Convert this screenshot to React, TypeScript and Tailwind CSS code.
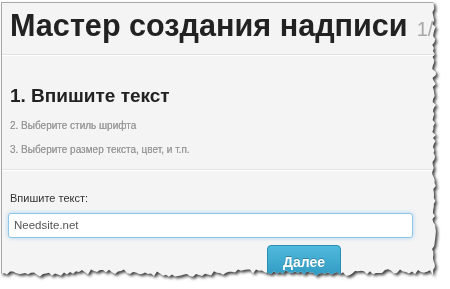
import React from "react";

function tornPolygon(): string {
  let seed = 7;
  const rnd = () => {
    seed = (seed * 9301 + 49297) % 233280;
    return seed / 233280;
  };
  const pts: string[] = [];
  const W = 436;
  const H = 275;
  pts.push("0px 0px");
  pts.push(`${W - 4}px 0px`);
  for (let y = 4; y < H - 4; y += 3) {
    const x = W - 3 + (rnd() - 0.5) * 4;
    pts.push(`${x.toFixed(1)}px ${y}px`);
  }
  for (let x = W - 4; x > 0; x -= 3) {
    const y = H - 4 + (rnd() - 0.5) * 5 + Math.sin(x / 23) * 1.5;
    pts.push(`${x}px ${y.toFixed(1)}px`);
  }
  pts.push(`0px ${H - 3}px`);
  return `polygon(${pts.join(",")})`;
}

export default function App() {
  const clip = tornPolygon();
  return (
    <div className="w-[450px] h-[289px] bg-white overflow-hidden font-['Liberation_Sans',Arial,sans-serif]">
      <div className="pt-[2px] pl-[1px] [filter:drop-shadow(2px_2px_1.5px_rgba(0,0,0,0.75))]">
        <div
          className="w-[436px] h-[275px] overflow-hidden bg-[#f4f4f4] border-l border-t border-[#a8a8a8]"
          style={{ clipPath: clip }}
        >
          <div className="flex items-baseline pl-[8px] pt-[2px] h-[52px] border-b border-[#e2e2e2] whitespace-nowrap">
            <span className="text-[30.6px] font-bold text-[#222] leading-[40px]">
              Мастер создания надписи
            </span>
            <span className="ml-[9px] text-[20px] text-[#a8a8a8]">1/3</span>
          </div>
          <div className="h-px bg-white" />
          <div className="pl-[8px] pt-[28px] border-b border-[#e4e4e4] h-[114px]">
            <div className="text-[19px] font-bold text-[#222] leading-[24px]">
              1. Впишите текст
            </div>
            <div className="mt-[11px] text-[10px] text-[#999] leading-[14px] [text-shadow:0_0_0.4px_#999]">
              2. Выберите стиль шрифта
            </div>
            <div className="mt-[10px] text-[10px] text-[#999] leading-[14px] [text-shadow:0_0_0.4px_#999]">
              3. Выберите размер текста, цвет, и т.п.
            </div>
          </div>
          <div className="h-px bg-white" />
          <div className="pl-[6px] pt-[20px]">
            <div className="pl-[2px] text-[11px] text-[#333] leading-[14px]">
              Впишите текст:
            </div>
            <div className="mt-[8px] w-[405px] h-[25px] bg-white border border-[#8ec6e6] rounded-[3px] shadow-[0_0_4px_rgba(82,168,236,0.45)] flex items-center pl-[5px] text-[11.5px] text-[#555]">
              Needsite.net
            </div>
            <div className="mt-[7px] ml-[259px] w-[74px] h-[34px] rounded-[4px] bg-gradient-to-b from-[#50badd] to-[#2f98c0] border border-[#2a8db3] flex justify-center pt-[8px] text-[14px] leading-[16px] font-bold text-white [text-shadow:0_-1px_0_rgba(0,0,0,0.25)]">
              Далее
            </div>
          </div>
        </div>
      </div>
    </div>
  );
}
